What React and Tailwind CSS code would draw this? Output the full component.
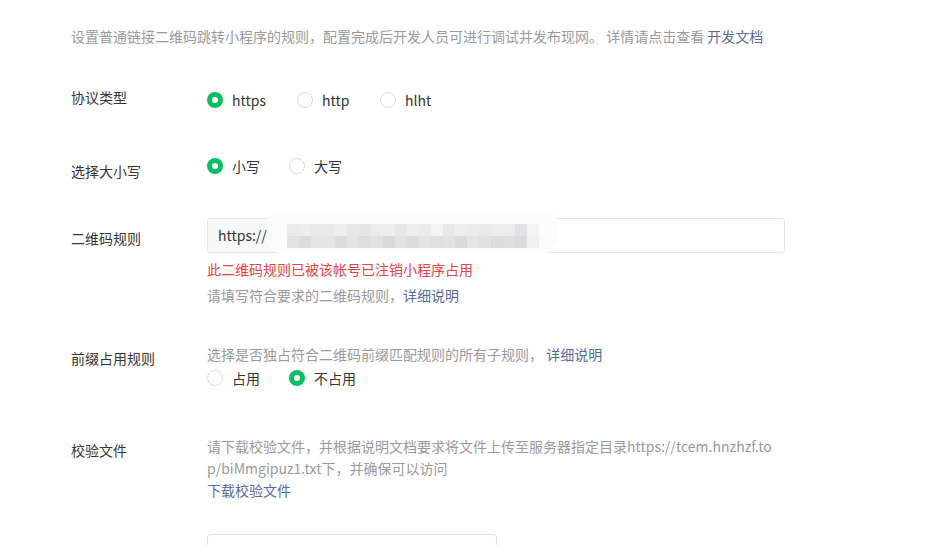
import React from "react";

const FONT = { fontFamily: '"Noto Sans CJK SC", "Microsoft YaHei", sans-serif' };

function Radio({ checked, label, width }) {
  return (
    <div className="flex items-center h-5 shrink-0" style={width ? { width } : undefined}>
      {checked ? (
        <span className="w-4 h-4 rounded-full bg-[#07c160] flex items-center justify-center shrink-0">
          <span className="w-[6px] h-[6px] rounded-full bg-white" />
        </span>
      ) : (
        <span className="w-4 h-4 rounded-full border border-[#dcdcdc] bg-white shrink-0" />
      )}
      <span className="ml-[9px] text-[14px] leading-5 text-[#353535]">{label}</span>
    </div>
  );
}

const cells = [
  ["#ebebeb", "#eeeeee", "#e8e9eb", "#e9eaea", "#eeeeee", "#e6e7e9", "#e6e6e6", "#ececeb", "#edeeee", "#e7e7e7", "#eeeeed", "#ebebeb", "#f4f4f4", "#e8e8e8", "#efeeee", "#ebebeb", "#e9e9e9", "#ebecec", "#eeedec", "#e1e2e5", "#f3f3f3"],
  ["#e2e2e2", "#dedcdb", "#e3e5e7", "#e4e5e5", "#dcdcda", "#e2e3e5", "#dddddd", "#e1e1e1", "#d8dad9", "#e2e2e2", "#dcdcdc", "#e4e4e4", "#e0e0e0", "#e3e3e3", "#dbdad9", "#e3e6e8", "#e0e0e0", "#dedcdb", "#dfdfdf", "#dadbde", "#f1f1f1"],
];

export default function App() {
  return (
    <div className="w-[929px] h-[545px] bg-white overflow-hidden pl-[71px]" style={FONT}>
      <div className="pt-[26px] text-[14px] leading-5 text-[#9a9a9a] whitespace-nowrap">
        设置普通链接二维码跳转小程序的规则，配置完成后开发人员可进行调试并发布现网。 详情请点击查看 <span className="text-[#576b95]">开发文档</span>
      </div>

      {/* Row 1 */}
      <div className="flex mt-[41px]">
        <div className="w-[136px] text-[14px] leading-5 text-[#353535]">协议类型</div>
        <div className="flex mt-[3px]">
          <Radio checked label="https" width={90} />
          <Radio label="http" width={83} />
          <Radio label="hlht" />
        </div>
      </div>

      {/* Row 2 */}
      <div className="flex mt-[46px]">
        <div className="w-[136px] mt-[5px] text-[14px] leading-5 text-[#353535]">选择大小写</div>
        <div className="flex">
          <Radio checked label="小写" width={82} />
          <Radio label="大写" />
        </div>
      </div>

      {/* Row 3 */}
      <div className="flex mt-[37px]">
        <div className="w-[136px] mt-[10px] text-[14px] leading-5 text-[#353535]">二维码规则</div>
        <div className="flex flex-col">
          <div className="relative w-[578px] h-[35px] border border-[#e4e6eb] rounded-[3px] flex overflow-visible">
            <div className="h-full bg-[#f7f8fa] pl-[10px] pr-[20px] flex items-center text-[14px] text-[#353535] rounded-l-[3px]">
              https://
            </div>
            <div className="flex-1 bg-white rounded-r-[3px]" />
            <div className="absolute left-[60px] top-[-9px] w-[290px] h-[43px] rounded-[12px] bg-[#fbfcfc] flex items-center pl-[19px]">
              <div className="flex flex-col mt-[8px]">
                {cells.map((row, i) => (
                  <div key={i} className="flex">
                    {row.map((c, j) => (
                      <span key={j} className="w-[12px] h-[12px]" style={{ backgroundColor: c }} />
                    ))}
                  </div>
                ))}
              </div>
            </div>
          </div>
          <div className="mt-[6px] text-[14px] leading-5 text-[#e64340]">此二维码规则已被该帐号已注销小程序占用</div>
          <div className="mt-[6px] text-[14px] leading-5 text-[#9a9a9a]">
            请填写符合要求的二维码规则，<span className="text-[#576b95]">详细说明</span>
          </div>
        </div>
      </div>

      {/* Row 4 */}
      <div className="flex mt-[39px]">
        <div className="w-[136px] mt-[4px] text-[14px] leading-5 text-[#353535]">前缀占用规则</div>
        <div className="flex flex-col">
          <div className="text-[14px] leading-5 text-[#9a9a9a] whitespace-nowrap">
            选择是否独占符合二维码前缀匹配规则的所有子规则， <span className="text-[#576b95]">详细说明</span>
          </div>
          <div className="flex mt-[4px]">
            <Radio label="占用" width={82} />
            <Radio checked label="不占用" />
          </div>
        </div>
      </div>

      {/* Row 5 */}
      <div className="flex mt-[47px]">
        <div className="w-[136px] mt-[5px] text-[14px] leading-5 text-[#353535]">校验文件</div>
        <div className="flex flex-col text-[14px] leading-[22px]">
          <div className="text-[#9a9a9a] whitespace-nowrap">
            请下载校验文件，并根据说明文档要求将文件上传至服务器指定目录https://tcem.hnzhzf.to
          </div>
          <div className="text-[#9a9a9a] whitespace-nowrap">p/biMmgipuz1.txt下，并确保可以访问</div>
          <div className="text-[#576b95]">下载校验文件</div>
        </div>
      </div>

      <div className="ml-[136px] mt-[33px] w-[290px] h-[36px] border border-[#e0e0e0] rounded-[4px]" />
    </div>
  );
}
